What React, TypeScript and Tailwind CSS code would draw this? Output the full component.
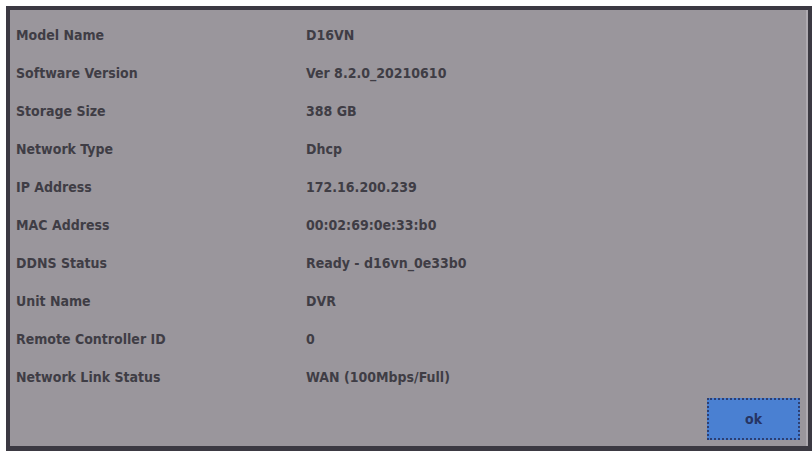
const rows: [string, string][] = [
  ["Model Name", "D16VN"],
  ["Software Version", "Ver 8.2.0_20210610"],
  ["Storage Size", "388 GB"],
  ["Network Type", "Dhcp"],
  ["IP Address", "172.16.200.239"],
  ["MAC Address", "00:02:69:0e:33:b0"],
  ["DDNS Status", "Ready - d16vn_0e33b0"],
  ["Unit Name", "DVR"],
  ["Remote Controller ID", "0"],
  ["Network Link Status", "WAN (100Mbps/Full)"],
];

export default function App() {
  return (
    <div className="h-[451px] w-[812px] overflow-hidden bg-white pl-[6px] pt-[6px]">
      <div className="flex h-[445px] w-[806px] flex-col border-[4px] border-b-[5px] border-[#3b3942] bg-[#9a969c] pl-[6px] pr-[8px] pt-[6px] shadow-[inset_-2px_0_0_#aeaab0] font-['DejaVu_Sans_Condensed',sans-serif] font-bold text-[14px] text-[#3f3d45]">
        {rows.map(([label, value]) => (
          <div key={label} className="grid h-[38px] grid-cols-[290px_1fr] items-center leading-[38px]">
            <span>{label}</span>
            <span>{value}</span>
          </div>
        ))}
        <button className="mt-[2px] h-[42px] w-[93px] self-end border-2 border-dotted border-[#2d3f72] bg-[#4a80d2] text-[14px] text-[#263463]">
          ok
        </button>
      </div>
    </div>
  );
}
